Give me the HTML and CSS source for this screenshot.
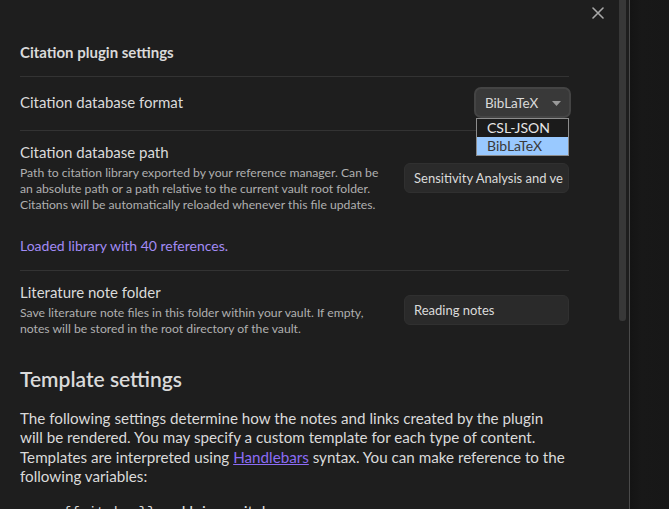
FILE: index.html
```html
<!DOCTYPE html>
<html lang="en">
<head>
<meta charset="utf-8">
<title>Citation plugin settings</title>
<link rel="stylesheet" href="styles.css">
</head>
<body>
<div class="app">
  <div class="modal">
    <button class="close" aria-label="Close">
      <svg width="12" height="12" viewBox="0 0 12 12"><path d="M1 1 L11 11 M11 1 L1 11" stroke="#a8a8a8" stroke-width="1.6" stroke-linecap="round" fill="none"/></svg>
    </button>
    <div class="content">
      <h3 class="section-title">Citation plugin settings</h3>

      <div class="setting first">
        <div class="info">
          <div class="name">Citation database format</div>
        </div>
        <div class="control">
          <div class="dropdown-wrap">
            <div class="dropdown">
              <span>BibLaTeX</span>
              <svg class="caret" width="9" height="5" viewBox="0 0 9 5"><path d="M0 0 H9 L4.5 5 Z" fill="#9a9a9a"/></svg>
            </div>
            <ul class="options">
              <li>CSL-JSON</li>
              <li class="selected">BibLaTeX</li>
            </ul>
          </div>
        </div>
      </div>

      <div class="setting">
        <div class="info">
          <div class="name">Citation database path</div>
          <div class="desc">Path to citation library exported by your reference manager. Can be an absolute path or a path relative to the current vault root folder. Citations will be automatically reloaded whenever this file updates.</div>
        </div>
        <div class="control">
          <div class="input">Sensitivity Analysis and ve</div>
        </div>
      </div>

      <p class="loaded">Loaded library with 40 references.</p>

      <div class="setting">
        <div class="info">
          <div class="name">Literature note folder</div>
          <div class="desc">Save literature note files in this folder within your vault. If empty, notes will be stored in the root directory of the vault.</div>
        </div>
        <div class="control">
          <div class="input">Reading notes</div>
        </div>
      </div>

      <h2 class="heading">Template settings</h2>
      <p class="para">The following settings determine how the notes and links created by the plugin<br>will be rendered. You may specify a custom template for each type of content.<br>Templates are interpreted using <a href="#">Handlebars</a> syntax. You can make reference to the<br>following variables:</p>
      <ul class="vars">
        <li><code>{{citekey}}</code><span>Unique citekey</span></li>
      </ul>
    </div>
    <div class="scrollbar"><div class="thumb"></div></div>
  </div>
  <div class="backdrop"></div>
</div>
</body>
</html>
```
FILE: styles.css
```css
* { box-sizing: border-box; }
html, body { margin: 0; padding: 0; }
body {
  background: #171717;
  font-family: Lato, "Noto Sans", sans-serif;
  color: #dadada;
  overflow: hidden;
}
.app {
  display: flex;
  height: 509px;
  width: 669px;
}
.modal {
  position: relative;
  display: flex;
  width: 630px;
  height: 509px;
  background: #1e1e1e;
  border-right: 1px solid #4a4a4a;
  overflow: hidden;
}
.backdrop {
  flex: 1;
  background: linear-gradient(90deg, #141414, #181818 30%, #171717);
}
.close {
  position: absolute;
  top: 6px;
  right: 24px;
  width: 14px;
  height: 14px;
  padding: 0;
  border: 0;
  background: none;
  display: flex;
  align-items: center;
  justify-content: center;
}
.content {
  width: 618px;
  flex: none;
  padding: 42px 49px 0 20px;
}
.scrollbar {
  width: 11px;
  flex: none;
  padding-left: 1px;
}
.thumb {
  width: 7px;
  height: 321px;
  background: #383838;
  border-radius: 0 0 3px 3px;
}
.section-title {
  margin: 0 0 14px;
  font-size: 15px;
  line-height: 20px;
  font-weight: 700;
  color: #dadada;
}
.setting {
  display: flex;
  align-items: center;
  border-top: 1px solid #333333;
  padding: 12px 0;
}
.setting.first {
  padding: 10px 0 12px;
}
.info {
  flex: 1;
  margin-right: 24px;
}
.name {
  font-size: 15px;
  line-height: 19px;
  color: #dadada;
}
.desc {
  margin-top: 3px;
  font-size: 12.2px;
  line-height: 16px;
  color: #b0b0b0;
}
.control {
  flex: none;
  display: flex;
  justify-content: flex-end;
}
.dropdown-wrap {
  position: relative;
  margin-right: -2px;
}
.dropdown {
  display: flex;
  align-items: center;
  justify-content: space-between;
  width: 97px;
  height: 31px;
  padding: 0 8px 0 9px;
  background: #393939;
  border: 2px solid #444444;
  border-radius: 7px;
  font-size: 13.5px;
  color: #dadada;
}
.caret { margin-top: 1px; }
.options {
  position: absolute;
  top: 31px;
  left: 2px;
  width: 93px;
  margin: 0;
  padding: 0;
  list-style: none;
  border: 1px solid #8c8c8c;
  background: #1b1b1b;
  font-size: 14px;
}
.options li {
  height: 18px;
  line-height: 18px;
  padding-left: 10px;
  color: #e6e6e6;
}
.options li.selected {
  background: #99c9ff;
  color: #3a3a3a;
}
.input {
  width: 165px;
  height: 30px;
  padding: 0 9px;
  background: #2a2a2a;
  border: 1px solid #303030;
  border-radius: 6px;
  font-size: 13px;
  line-height: 28px;
  color: #dadada;
  white-space: nowrap;
  overflow: hidden;
}
.loaded {
  margin: 11px 0 14px;
  font-size: 14px;
  line-height: 20px;
  color: #a28bf5;
}
.heading {
  margin: 16px 0 0;
  font-size: 21px;
  line-height: 28px;
  font-weight: 600;
  color: #dadada;
}
.para {
  margin: 16px 0 0;
  font-size: 15.2px;
  line-height: 19.4px;
  color: #dadada;
  white-space: nowrap;
}
.para a {
  color: #8b6cf5;
  text-decoration: underline;
}
.vars {
  margin: 14px 0 0;
  padding-left: 43px;
  list-style: none;
  font-size: 16px;
  line-height: 20px;
}
.vars li {
  display: flex;
  align-items: baseline;
  gap: 26px;
}
.vars code {
  font-family: "Liberation Mono", monospace;
  font-size: 14px;
  color: #dadada;
}
```
